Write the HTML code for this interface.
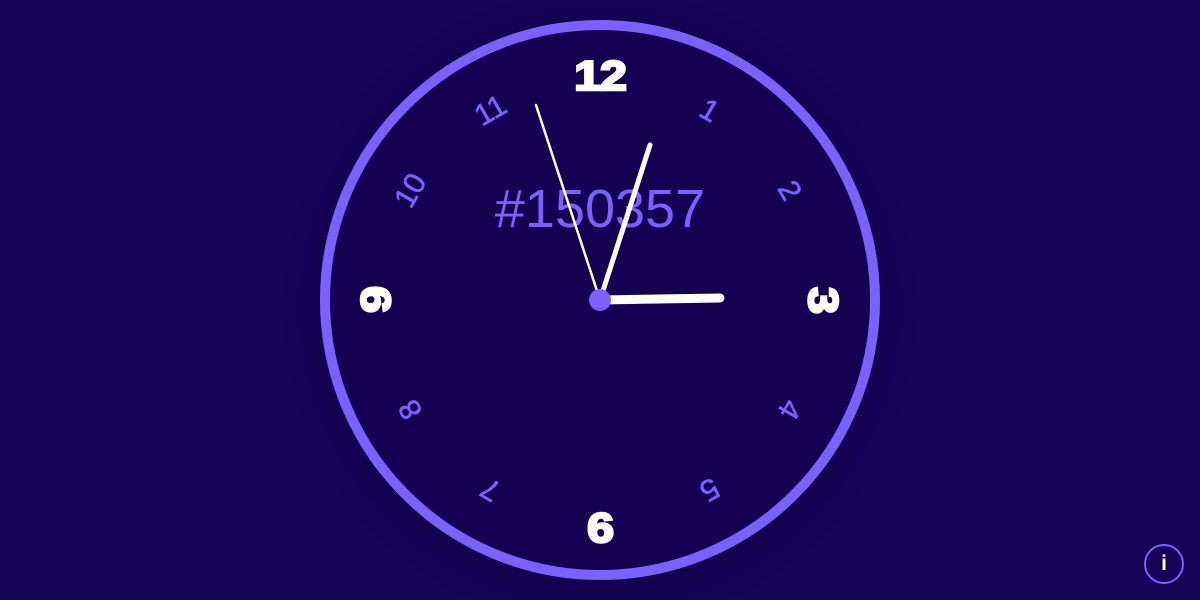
<!DOCTYPE html>
<html><head><style>
html,body{margin:0;padding:0;}
body{width:1200px;height:600px;background:#150357;overflow:hidden;position:relative;font-family:"Liberation Sans",sans-serif;}
.face{position:absolute;left:320px;top:20px;width:540px;height:540px;border:10px solid #7b61ff;border-radius:50%;background:#140152;box-shadow:0 8px 30px 10px rgba(8,0,40,0.2);}
.n{position:absolute;left:600px;top:300px;width:0;height:0;}
.n span{position:absolute;display:block;width:80px;text-align:center;left:-40px;line-height:1;}
.big span{font-size:42px;font-weight:900;color:#fff;top:-19px;letter-spacing:-1px;-webkit-text-stroke:2.5px #fff;transform:scaleX(1.15);}
.sm span{font-size:30px;color:#7b61ff;top:-15px;-webkit-text-stroke:0.6px #7b61ff;}
.hex{position:absolute;left:400px;width:400px;top:178px;text-align:center;font-size:54px;color:#7b61ff;}
.info{position:absolute;left:1144px;top:544px;width:36px;height:36px;border:2px solid #7b61ff;border-radius:50%;color:#fff;font-weight:bold;font-size:21px;text-align:center;line-height:36px;}
svg{position:absolute;left:0;top:0;}
</style></head><body>
<div class="face"></div>
<div class="hex">#150357</div>
<div class="n big" style="transform:translate(0,-226px)"><span>12</span></div>
<div class="n big" style="transform:translate(225px,0) rotate(90deg)"><span>3</span></div>
<div class="n big" style="transform:translate(0,226px)"><span>6</span></div>
<div class="n big" style="transform:translate(-226px,0) rotate(270deg)"><span>9</span></div>
<div class="n sm" style="transform:rotate(30deg) translate(0,-218px)"><span>1</span></div>
<div class="n sm" style="transform:rotate(60deg) translate(0,-218px)"><span>2</span></div>
<div class="n sm" style="transform:rotate(120deg) translate(0,-218px)"><span>4</span></div>
<div class="n sm" style="transform:rotate(150deg) translate(0,-218px)"><span>5</span></div>
<div class="n sm" style="transform:rotate(210deg) translate(0,-218px)"><span>7</span></div>
<div class="n sm" style="transform:rotate(240deg) translate(0,-218px)"><span>8</span></div>
<div class="n sm" style="transform:rotate(300deg) translate(0,-218px)"><span>10</span></div>
<div class="n sm" style="transform:rotate(330deg) translate(0,-218px)"><span>11</span></div>
<svg width="1200" height="600">
<line x1="600" y1="300" x2="720" y2="298" stroke="#fff" stroke-width="9" stroke-linecap="round"/>
<line x1="600" y1="300" x2="650" y2="145" stroke="#fff" stroke-width="5" stroke-linecap="round"/>
<line x1="600" y1="300" x2="536" y2="105" stroke="#fff" stroke-width="2.5" stroke-linecap="round"/>
<circle cx="600" cy="300" r="11" fill="#7b61ff"/>
</svg>
<div class="info">i</div>
</body></html>
